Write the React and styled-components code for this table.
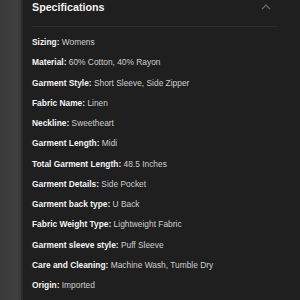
import React from 'react';
import styled, { createGlobalStyle } from 'styled-components';

const GlobalStyle = createGlobalStyle`
  html, body {
    margin: 0;
    padding: 0;
    background: #1f1f1f;
  }
  body {
    font-family: "Liberation Sans", Arial, sans-serif;
  }
`;

const specs = [
  ['Sizing', 'Womens'],
  ['Material', '60% Cotton, 40% Rayon'],
  ['Garment Style', 'Short Sleeve, Side Zipper'],
  ['Fabric Name', 'Linen'],
  ['Neckline', 'Sweetheart'],
  ['Garment Length', 'Midi'],
  ['Total Garment Length', '48.5 Inches'],
  ['Garment Details', 'Side Pocket'],
  ['Garment back type', 'U Back'],
  ['Fabric Weight Type', 'Lightweight Fabric'],
  ['Garment sleeve style', 'Puff Sleeve'],
  ['Care and Cleaning', 'Machine Wash, Tumble Dry'],
  ['Origin', 'Imported'],
];

const Page = styled.div`
  display: flex;
  width: 300px;
  height: 300px;
  overflow: hidden;
`;

const Strip = styled.div`
  width: 21px;
  flex-shrink: 0;
  background: linear-gradient(to right, #3a3a3a, #404040 80%, #383838);
  border-right: 2px solid #2a2a2a;
`;

const Panel = styled.section`
  flex: 1;
  background: #1f1f1f;
  padding: 0 22px 0 9px;
`;

const Header = styled.div`
  display: flex;
  align-items: flex-start;
  justify-content: space-between;
  height: 26px;
  border-bottom: 1px solid #2c2c2c;
`;

const Title = styled.h2`
  margin: 0;
  font-size: 10.7px;
  line-height: 15px;
  font-weight: bold;
  color: #f2f2f2;
`;

const Chevron = styled.svg`
  width: 10px;
  height: 6px;
  margin: 4px 7px 0 0;
`;

const List = styled.ul`
  list-style: none;
  margin: 0;
  padding: 5px 0 0;
`;

const Row = styled.li`
  height: 20.25px;
  line-height: 20.25px;
  font-size: 8.4px;
  color: #cfcfcf;
  white-space: nowrap;
`;

const Label = styled.strong`
  color: #f4f4f4;
  font-weight: bold;
`;

export default function App() {
  return (
    <>
      <GlobalStyle />
      <Page>
        <Strip />
        <Panel>
          <Header>
            <Title>Specifications</Title>
            <Chevron viewBox="0 0 10 6">
              <path d="M1 5.2 L5 1.2 L9 5.2" fill="none" stroke="#707070" strokeWidth="1.2" />
            </Chevron>
          </Header>
          <List>
            {specs.map(([label, value]) => (
              <Row key={label}>
                <Label>{label}:</Label> {value}
              </Row>
            ))}
          </List>
        </Panel>
      </Page>
    </>
  );
}
